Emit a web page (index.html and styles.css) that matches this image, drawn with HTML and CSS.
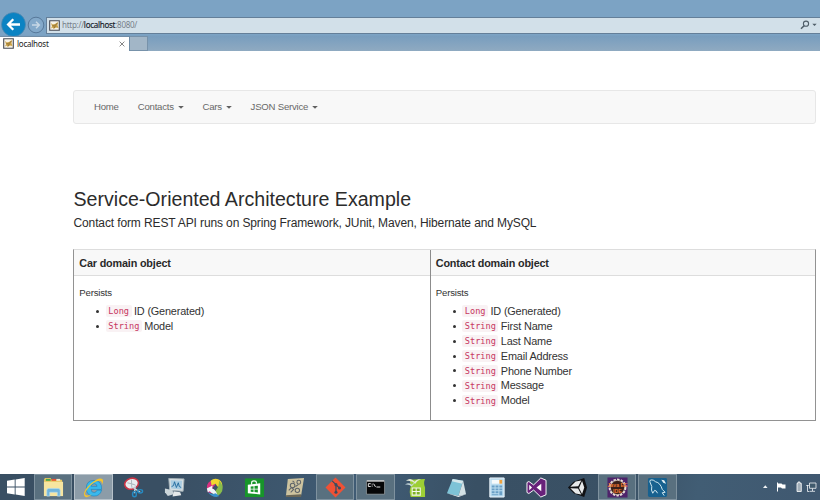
FILE: index.html
```html
<!DOCTYPE html>
<html lang="en">
<head>
<meta charset="utf-8">
<title>localhost</title>
<link rel="stylesheet" href="styles.css">
</head>
<body>
<svg width="0" height="0" class="defs">
  <symbol id="cat" viewBox="0 0 11 11"><path d="M.7.7h9.6v9.6H.7z" fill="#f7f3e9" stroke="#454954" stroke-width="1.1"/><path d="M2 3l1.8 1.5L6 4l3-2-.5 3.2L9.5 8 7 7.5 4.5 9 4 7.4 2 8.4l1-2.2z" fill="#c9a044"/><path d="M3.5 5.5l2 .6L8.5 3M5 8l1.4-1.8" stroke="#695638" stroke-width=".6" fill="none"/></symbol>
</svg>
<header class="browser">
  <div class="address-row">
    <svg class="back" viewBox="0 0 25 25"><circle cx="12.5" cy="12.5" r="12" fill="#0b83c3" stroke="#5688ad" stroke-width=".7"/><path d="M19 12.5H7.5M12.3 7.3l-5.2 5.2 5.2 5.2" fill="none" stroke="#fff" stroke-width="2.3"/></svg>
    <svg class="forward" viewBox="0 0 18 18"><circle cx="9" cy="9" r="7.8" fill="#83a9ca" stroke="#58799a"/><path d="M5 9h7M9 5.8L12.3 9 9 12.2" fill="none" stroke="#c7d8e6" stroke-width="1.5"/></svg>
    <div class="address">
      <svg class="cat"><use href="#cat"/></svg>
      <span class="url">http://<b>localhost</b>:8080/</span>
      <svg class="search" viewBox="0 0 18 10"><circle cx="6" cy="3.7" r="2.6" fill="none" stroke="#4f5e69" stroke-width="1.1"/><path d="M4.1 5.7L1 8.8" stroke="#4f5e69" stroke-width="1.5"/><path d="M12.3 3.8h4.4l-2.2 2.2z" fill="#4f5e69"/></svg>
    </div>
  </div>
  <div class="tabs">
    <div class="tab"><svg class="cat"><use href="#cat"/></svg><span>localhost</span><svg class="close" viewBox="0 0 6 6"><path d="M.6.6l4.8 4.8M5.4.6L.6 5.4" stroke="#858585"/></svg></div>
    <div class="new-tab"></div>
  </div>
</header>
<main>
  <nav class="navbar">
    <a>Home</a><a>Contacts<svg class="caret" viewBox="0 0 6 3"><path d="M.2 0h5.6L3 2.8z"/></svg></a><a>Cars<svg class="caret" viewBox="0 0 6 3"><path d="M.2 0h5.6L3 2.8z"/></svg></a><a>JSON Service<svg class="caret" viewBox="0 0 6 3"><path d="M.2 0h5.6L3 2.8z"/></svg></a>
  </nav>
  <h1>Service-Oriented Architecture Example</h1>
  <p class="lead">Contact form REST API runs on Spring Framework, JUnit, Maven, Hibernate and MySQL</p>
  <div class="objects">
    <section class="object">
      <h2>Car domain object</h2>
      <div class="body"><p>Persists</p>
      <ul><li><code>Long</code> ID (Generated)</li><li><code>String</code> Model</li></ul></div>
    </section>
    <section class="object">
      <h2>Contact domain object</h2>
      <div class="body"><p>Persists</p>
      <ul><li><code>Long</code> ID (Generated)</li><li><code>String</code> First Name</li><li><code>String</code> Last Name</li><li><code>String</code> Email Address</li><li><code>String</code> Phone Number</li><li><code>String</code> Message</li><li><code>String</code> Model</li></ul></div>
    </section>
  </div>
</main>
<footer class="taskbar">
  <div class="start"><svg viewBox="0 0 18 18"><path d="M0 2.7l7.7-1.1v7H0zM8.6 1.4L17.7 0v8.6H8.6zM0 9.4h7.7v7L0 15.3zM8.6 9.4h9.1V18l-9.1-1.5z" fill="#fff"/></svg></div>
  <div class="app open"><svg viewBox="0 0 22 22"><path d="M1 3l1-2h6l1 2h11v17H1z" fill="#e5c65f"/><path d="M3 2h5v2H3z" fill="#48a74d"/><path d="M9 2h5v2H9z" fill="#e65335"/><path d="M14 2h4v2h-4z" fill="#eee8cf"/><path d="M1 5h20v15H1z" fill="#f6e5a0"/><path d="M4 20v-6q0-2 2-2h10q2 0 2 2v6h-3v-4H7v4z" fill="#70b5dd" stroke="#b4dcf0" stroke-width=".7"/></svg></div>
  <div class="app active"><svg viewBox="0 0 22 22"><path d="M19.5 13.8q-1.7 6.2-8 6.2-8 0-8-8.2 0-8.2 8-8.2 8.3 0 8 9.4H8.4q.2 3.3 3.3 3.3 2.1 0 3-2.5zM8.5 9.8h6.2q-.3-2.8-3-2.8t-3.2 2.8z" fill="#38b8ed" stroke="#1380bd" stroke-width=".6"/><path d="M2 20.5Q-1.500 16 8 7q9-7.500 12.300-4.800 1.700 1.900-.5 5.800Q20.200 4 17 4 12 4 6 11t-2.500 8q2 1 6-1-5 4.500-7.500 2.500z" fill="#f5c52c"/></svg></div>
  <div class="app"><svg viewBox="0 0 22 22"><g transform="rotate(-15 9 7)"><ellipse cx="9" cy="7" rx="7.3" ry="5.7" fill="#e9edf0" stroke="#c93445" stroke-width="1.7"/><path d="M5 5l7 4M10 3l-2 8" stroke="#acb7bd"/></g><path d="M9 10l9 6M13 8l-1 9" stroke="#c8d6df" stroke-width="1.4"/><ellipse cx="12" cy="18" rx="2" ry="2.7" fill="none" stroke="#258bc3" stroke-width="1.5"/><ellipse cx="18" cy="15" rx="2.5" ry="1.8" fill="none" stroke="#258bc3" stroke-width="1.5"/></svg></div>
  <div class="app"><svg viewBox="0 0 22 22"><path d="M5 1.500l16 .5-1 13-14-1z" fill="#d8dfe2" stroke="#a3b0b7"/><path d="M7 3.500l12 .5-.7 9-10.800-1z" fill="#a9cce2"/><path d="M8 10l2-1 1-4 2 6 2-5 1 4 2 1" fill="none" stroke="#236b9e"/><path d="M1 12l8 2 1 4-6 2-3-4z" fill="#cbd5d9"/><path d="M10 15l7 1 1 3-9 1.500z" fill="#e5e9ea"/></svg></div>
  <div class="app"><svg viewBox="0 0 22 22"><path d="M10 3Q3 5 3 11l1 5 4 1 1-6 3-3z" fill="#da3181"/><path d="M7 4q4-4 9-1 4 3 3 8l-5-1-2-3-4 2z" fill="#f0d82f"/><path d="M16 4q5 5 3 11-2 4-5 5l-2-5 3-5z" fill="#88bc4c"/><path d="M3 12l6-3-.5 3q4 1 5.500 7-4 0-8-4l-2 1z" fill="#f0f5f7"/><path d="M4 16q4 5 9 5l3-1q-2-2-4-3l-3 1z" fill="#3791cc"/></svg></div>
  <div class="app"><svg viewBox="0 0 22 22"><path d="M1 1.500h20V21H1z" fill="#17952a"/><path d="M4 8l13-1.500v11.800L4 17z" fill="#fff"/><path d="M8 8V6q0-2 2.500-2T13 6v1" fill="none" stroke="#fff" stroke-width="1.200"/><path d="M7 10l3-.4v2.700H7zM11 9.500l3.500-.4v3.200H11zM7 13h3v2.800l-3-.3zM11 13h3.500v3.200l-3.500-.4z" fill="#17952a"/></svg></div>
  <div class="app"><svg viewBox="0 0 22 22"><path d="M4 2l17-1-3 18-16 1z" fill="#cdc39f"/><path d="M2 19l16-1v3L2 21z" fill="#696657"/><g fill="none" stroke="#5e6469" stroke-width="1.100"><circle cx="9" cy="9" r="2.400"/><circle cx="15.500" cy="5.500" r="2"/><circle cx="14" cy="14" r="2.300"/><path d="M5 14l3-3 2 2-3 3M9 4l2 2M12 10l3-2"/></g></svg></div>
  <div class="app open"><svg viewBox="0 0 22 22"><path d="M11 .5L21.500 11 11 21.500.5 11z" fill="#ef5135"/><path d="M7.500 4l4 4v8M11.500 8l4 4" stroke="#394d60" stroke-width="1.300" fill="none"/><g fill="#394d60"><circle cx="11.500" cy="8" r="1.600"/><circle cx="15.200" cy="11.500" r="1.600"/><circle cx="11.500" cy="16" r="1.600"/></g></svg></div>
  <div class="app open"><svg viewBox="0 0 22 22"><path d="M1.500 4h19v14h-19z" fill="#050607" stroke="#a3a9ad" stroke-width=".7"/><path d="M2 3.500h18v1.300H2z" fill="#ddd"/><path d="M6 7H3.500v3H6M7.500 7v1M7.500 9v1M9 7l2 3.300M12 10.500h4" fill="none" stroke="#eee"/></svg></div>
  <div class="app"><svg viewBox="0 0 22 22"><path d="M5 3l16-1q-2 4 0 9v10H6q-2-6 0-11z" fill="#9dcf35"/><path d="M1 4q5-4 9 1 3-4 7-2-4 0-6 4Q7 3 1 4z" fill="#e5ead9"/><path d="M0 8q4-3 7 0 2-2 4-2-2 1-4 4Q4 7 0 8z" fill="#c8d9dc"/><path d="M7.500 11.500h8.500V19H7.500zM11.700 11.500V19M7.500 15.200H16" fill="#7eb225" stroke="#f5f8ec" stroke-width="1.100"/></svg></div>
  <div class="app"><svg viewBox="0 0 22 22"><path d="M7 2l11 2-5 16-12-3z" fill="#7ec3d7"/><path d="M7 2l11 2-1 3L6 4.500z" fill="#d5e7eb"/><path d="M18 4l3 14-8 2z" fill="#d3e1e5"/><path d="M1 17l12 3 8-2-8 3z" fill="#eef3f4"/></svg></div>
  <div class="app"><svg viewBox="0 0 22 22"><path d="M4 1h15v20H4z" fill="#bbdcef" stroke="#ecf5fb"/><path d="M6 3h11v4H6z" fill="#f6fafb"/><path d="M14 3h3v4h-3z" fill="#eda341"/><g fill="#6a9fc6"><path d="M6 9h3v2H6zM10 9h3v2h-3zM14 9h3v2h-3zM6 12h3v2H6zM10 12h3v2h-3zM14 12h3v2h-3zM6 15h3v2H6zM10 15h3v2h-3zM14 15h3v4h-3zM6 18h7v1H6z"/></g></svg></div>
  <div class="app"><svg viewBox="0 0 22 22"><path d="M15.500 1L21 3.400v15.200L15.500 21 8 13.700l-5 3.600-2-1.100V5.800l2-1.100 5 3.600z" fill="#68217a" stroke="#fff"/><path d="M16 7v8l-5-4zM3.400 8v6L6.300 11z" fill="#fff"/></svg></div>
  <div class="app"><svg viewBox="0 0 22 22"><path d="M1 11l6-6 11-4 3 10-3 10-11-4z" fill="#101114"/><path d="M3.500 10.200L9 4.800l6-1.200-3.200 6zM15.800 4.300l2.300 6.700-2.300 6.700-3.200-6.200zM3.500 11.800l8.100.3 3.400 6.300-6-1.200z" fill="#e7e9ea"/></svg></div>
  <div class="app open"><svg viewBox="0 0 22 22"><path d="M.5.5h21v21H.5z" fill="#4e236a"/><circle cx="11" cy="11" r="8" fill="none" stroke="#e8dfd6" stroke-width="2.600" stroke-dasharray="2.500 1.200"/><circle cx="11" cy="11" r="7.500" fill="#3a201a" stroke="#e8dfd6" stroke-width=".7"/><text x="11" y="10.800" class="ide">Java EE</text><text x="11" y="16.500" class="ide">IDE</text></svg></div>
  <div class="app open"><svg viewBox="0 0 22 22"><rect x="1" y="1" width="20" height="20" rx="1.500" fill="#17618f"/><path d="M6 17q-2-3-1-7L3 5q-.5-2 2-2 2 0 4 2 5 1 7 8l3 3-3 .5 2 3M6 17l2-3q2 0 3 3" fill="none" stroke="#d8edf3"/><path d="M15 3l3 .4 2 3.600-3-1z" fill="#e2eff4"/></svg></div>
  <div class="tray">
    <svg viewBox="0 0 54 12"><path d="M0 7l2.300-2.700L4.600 7z" fill="#f3f5f7"/><path d="M14.500 1.500v9" stroke="#fff"/><path d="M15 2.500h3.500l1 1h3v4H19l-1-1h-3z" fill="#fff"/><path d="M34 2.300h1V1h2v1.300h1.300v8.200H34z" fill="#a2afb9" stroke="#fff" stroke-width=".8"/><path d="M46.500 2H53v5.300h-6.500zM49.500 7.500V10M47 10.300h5" fill="#405a6d" stroke="#f3f5f7" stroke-width=".8"/><path d="M44.500 4v6.500h2M43.300 4.500h2.500" fill="none" stroke="#f3f5f7" stroke-width=".8"/></svg>
  </div>
</footer>
</body>
</html>
```

FILE: styles.css
```css
* { box-sizing: border-box; }
body { margin: 0; width: 820px; height: 500px; overflow: hidden; display: flex; flex-direction: column; background: #fff; color: #333; font-family: "Liberation Sans", Arial, sans-serif; }
.defs { position: absolute; }
svg { display: block; flex: none; }
h1, h2, p, ul { margin: 0; padding: 0; }

.browser { height: 51px; padding-top: 13px; background: linear-gradient(#7ca3c4 0 35px, #789dbe 36px, #8faac1 51px); font-family: "Noto Sans", sans-serif; flex: none; }
.address-row { display: flex; align-items: center; height: 23px; }
.back { width: 25px; height: 25px; margin-left: .5px; }
.forward { width: 18px; height: 18px; margin: 0 1px 0 1.5px; }
.address { flex: 1; height: 17px; margin-top: 1px; display: flex; align-items: center; border: 1px solid #647f99; border-right: 0; background: #d2e0e9; padding: 0 2px 0 2px; }
.cat { width: 11px; height: 11px; }
.url { margin-left: 2px; font-size: 8px; letter-spacing: -.27px; line-height: 12px; color: #77818a; }
.url b { font-weight: 400; color: #17212a; -webkit-text-stroke: .15px #17212a; }
.search { width: 18px; height: 10px; margin-left: auto; }
.tabs { display: flex; height: 15px; }
.tab { width: 130px; display: flex; align-items: center; padding: 0 4px 1px 3px; background: #fff; border: solid #718da6; border-width: 1px 1px 0 0; font-size: 8px; letter-spacing: -.25px; line-height: 12px; color: #222; }
.tab span { margin-left: 3px; }
.close { width: 6px; height: 6px; margin-left: auto; }
.new-tab { width: 18px; background: #a2b6c7; border: 1px solid #7792aa; border-left: 0; }

main { flex: 1; padding: 39px 4px 0 73px; }
.navbar { height: 34px; display: flex; align-items: center; gap: 19px; padding: 0 0 1px 20px; border: 1px solid #e7e7e7; border-radius: 3px; background: #f8f8f8; font-size: 9.6px; letter-spacing: -.22px; color: #686868; }
.navbar a { display: flex; align-items: center; }
.caret { width: 6px; height: 3px; margin: 2px 0 0 3.7px; fill: #606060; }
h1 { margin-top: 62px; padding-left: .5px; font-size: 19.6px; line-height: 26px; font-weight: 400; color: #2c2c2c; white-space: nowrap; }
.lead { margin-top: 3px; padding-left: .5px; font-size: 12px; letter-spacing: -.12px; line-height: 16px; color: #2c2c2c; white-space: nowrap; }
.objects { margin-top: 18px; width: 743px; height: 172px; display: grid; grid-template-columns: 355.5px 1fr; border: 1px solid #929292; border-top-color: #ddd; }
.object + .object { border-left: 1px solid #8c8c8c; }
.object h2 { height: 26px; padding-left: 5.3px; border-bottom: 1px solid #ddd; background: #f8f8f8; font-size: 10.8px; letter-spacing: -.16px; line-height: 26px; color: #292929; }
.body { padding: 10px 5.3px; }
.body p { font-size: 9.6px; letter-spacing: -.18px; line-height: 13px; }
ul { list-style: none; margin-top: 5px; padding-left: 17px; }
li { display: flex; align-items: center; font-size: 10.9px; letter-spacing: -.18px; line-height: 14.87px; white-space: nowrap; }
li::before { content: ""; width: 3px; height: 3px; border-radius: 50%; background: #333; margin-right: 6.5px; }
code { margin-right: 2.5px; padding: 1px 2.5px 0; border-radius: 2px; background: #f9f2f4; color: #c7375f; font: 8.6px/11px "DejaVu Sans Mono", monospace; letter-spacing: 0; }

.taskbar { flex: none; height: 26px; display: flex; gap: 2px; background: linear-gradient(100deg, #394f63 0 20%, #405c75 45%, #395064 58%, #3a5165 76%, #415d74 85%, #405870); }
.start { width: 32px; padding: 4px 0 0 7px; }
.start svg { width: 18px; height: 18px; }
.app { width: 38.3px; height: 26px; border: 1px solid transparent; display: flex; justify-content: center; align-items: center; }
.app svg { width: 21px; height: 21px; }
.open { background: #59707f; border-color: #7f929f; }
.active { background: #8c9ca8; border-color: #b6c1c9; }
.ide { font: bold 5.5px "Liberation Sans", sans-serif; fill: #f17b36; text-anchor: middle; }
.tray { margin-left: auto; padding: 7px 3px 0 0; }
.tray svg { width: 54px; height: 12px; }
```
